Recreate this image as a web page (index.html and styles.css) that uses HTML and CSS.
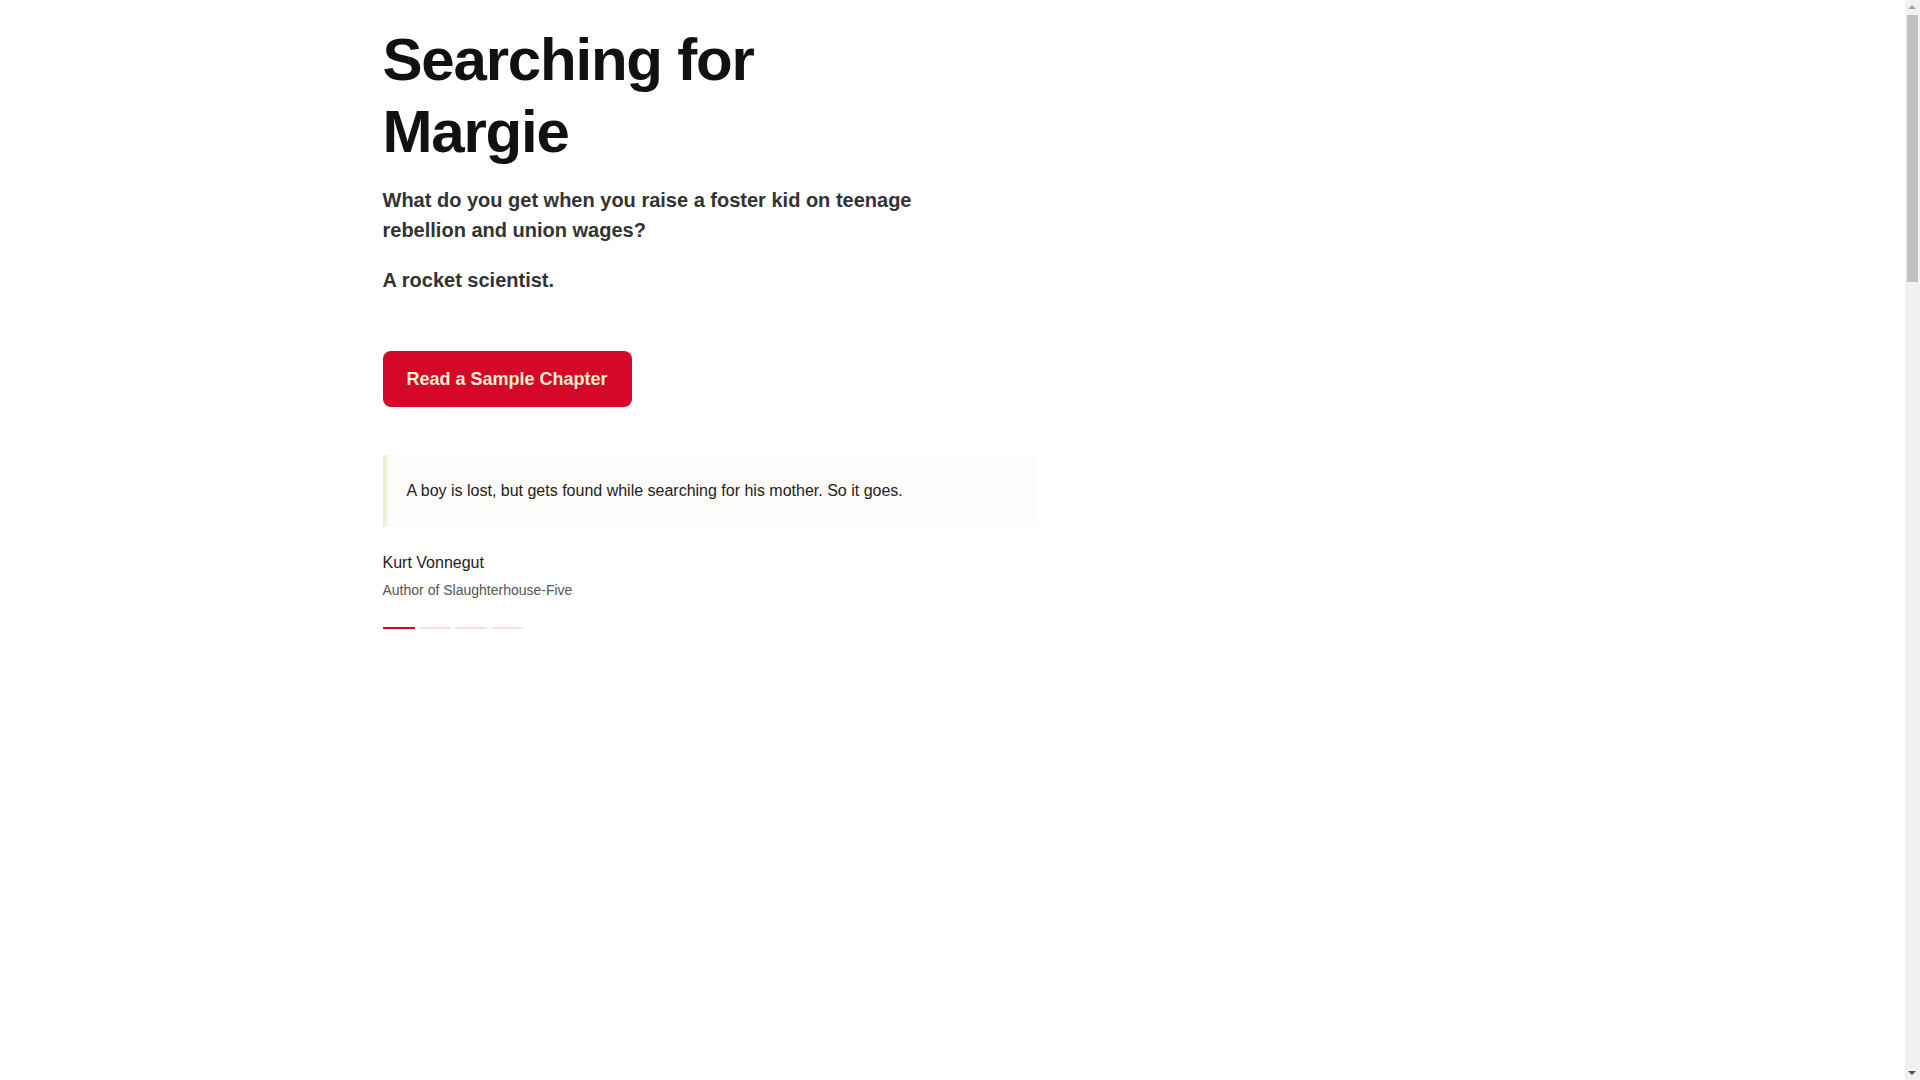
FILE: index.html
```html
<!DOCTYPE html>
<html lang="en">
<head>
<meta charset="utf-8">
<title>Searching for Margie</title>
<link rel="stylesheet" href="styles.css">
</head>
<body>
<main class="page">
  <section class="hero">
    <div class="hero-text">
      <h1 class="title">Searching for Margie</h1>
      <p class="lead">What do you get when you raise a foster kid on teenage rebellion and union wages?</p>
      <p class="lead lead-second">A rocket scientist.</p>
      <a class="cta" href="#">Read a Sample Chapter</a>
      <div class="testimonial">
        <blockquote class="quote">A boy is lost, but gets found while searching for his mother. So it goes.</blockquote>
        <div class="cite-name">Kurt Vonnegut</div>
        <div class="cite-role">Author of Slaughterhouse-Five</div>
        <div class="dots">
          <span class="dot active"></span>
          <span class="dot"></span>
          <span class="dot"></span>
          <span class="dot"></span>
        </div>
      </div>
    </div>
  </section>
</main>
<div class="scrollbar" aria-hidden="true">
  <span class="sb-arrow sb-up"></span>
  <span class="sb-thumb"></span>
  <span class="sb-arrow sb-down"></span>
</div>
</body>
</html>
```

FILE: styles.css
```css
* { box-sizing: border-box; }

html, body {
  margin: 0;
  padding: 0;
  background: #ffffff;
}

body {
  font-family: "Liberation Sans", Arial, Helvetica, sans-serif;
  color: #222;
  padding-right: 15px;
}

.page {
  max-width: 1140px;
  margin: 0 auto;
  padding-top: 24px;
  min-height: 4250px;
}

.hero-text {
  width: 655px;
  display: flex;
  flex-direction: column;
  align-items: flex-start;
}

.title {
  margin: 0;
  max-width: 560px;
  font-size: 60px;
  line-height: 72px;
  font-weight: 700;
  letter-spacing: -0.02em;
  color: #111;
}

.lead {
  margin: 17px 0 0;
  max-width: 580px;
  font-size: 20px;
  line-height: 30px;
  font-weight: 700;
  color: #333;
}

.lead-second {
  margin-top: 20px;
}

.cta {
  margin-top: 56px;
  display: inline-block;
  padding: 16px 24px;
  font-size: 18px;
  line-height: 24px;
  font-weight: 700;
  color: #f9f0d0;
  background: #d50627;
  border-radius: 8px;
  text-decoration: none;
}

.testimonial {
  margin-top: 48px;
  width: 100%;
}

.quote {
  margin: 0;
  padding: 24px 20px;
  background: #fdfcfa;
  border-left: 4px solid #eef0d4;
  font-size: 16px;
  line-height: 24px;
  color: #222;
}

.cite-name {
  margin-top: 24px;
  font-size: 16px;
  line-height: 24px;
  color: #222;
}

.cite-role {
  margin-top: 5px;
  font-size: 14px;
  line-height: 21px;
  color: #555;
}

.dots {
  margin-top: 26px;
  display: flex;
  gap: 4px;
}

.dot {
  width: 32px;
  height: 2px;
  background: #fbe0e5;
}

.dot.active {
  background: #d50627;
}

/* imitation of the browser's vertical scrollbar */
.scrollbar {
  position: fixed;
  top: 0;
  right: 0;
  width: 15px;
  height: 100vh;
  background: #f1f1f1;
}

.sb-thumb {
  position: absolute;
  left: 2px;
  top: 15px;
  width: 11px;
  height: 267px;
  background: #c1c1c1;
}

.sb-arrow {
  position: absolute;
  left: 3px;
  width: 0;
  height: 0;
  border-left: 4.5px solid transparent;
  border-right: 4.5px solid transparent;
}

.sb-up {
  top: 5px;
  border-bottom: 4px solid #a3a3a3;
}

.sb-down {
  bottom: 5px;
  border-top: 4px solid #505050;
}
```
